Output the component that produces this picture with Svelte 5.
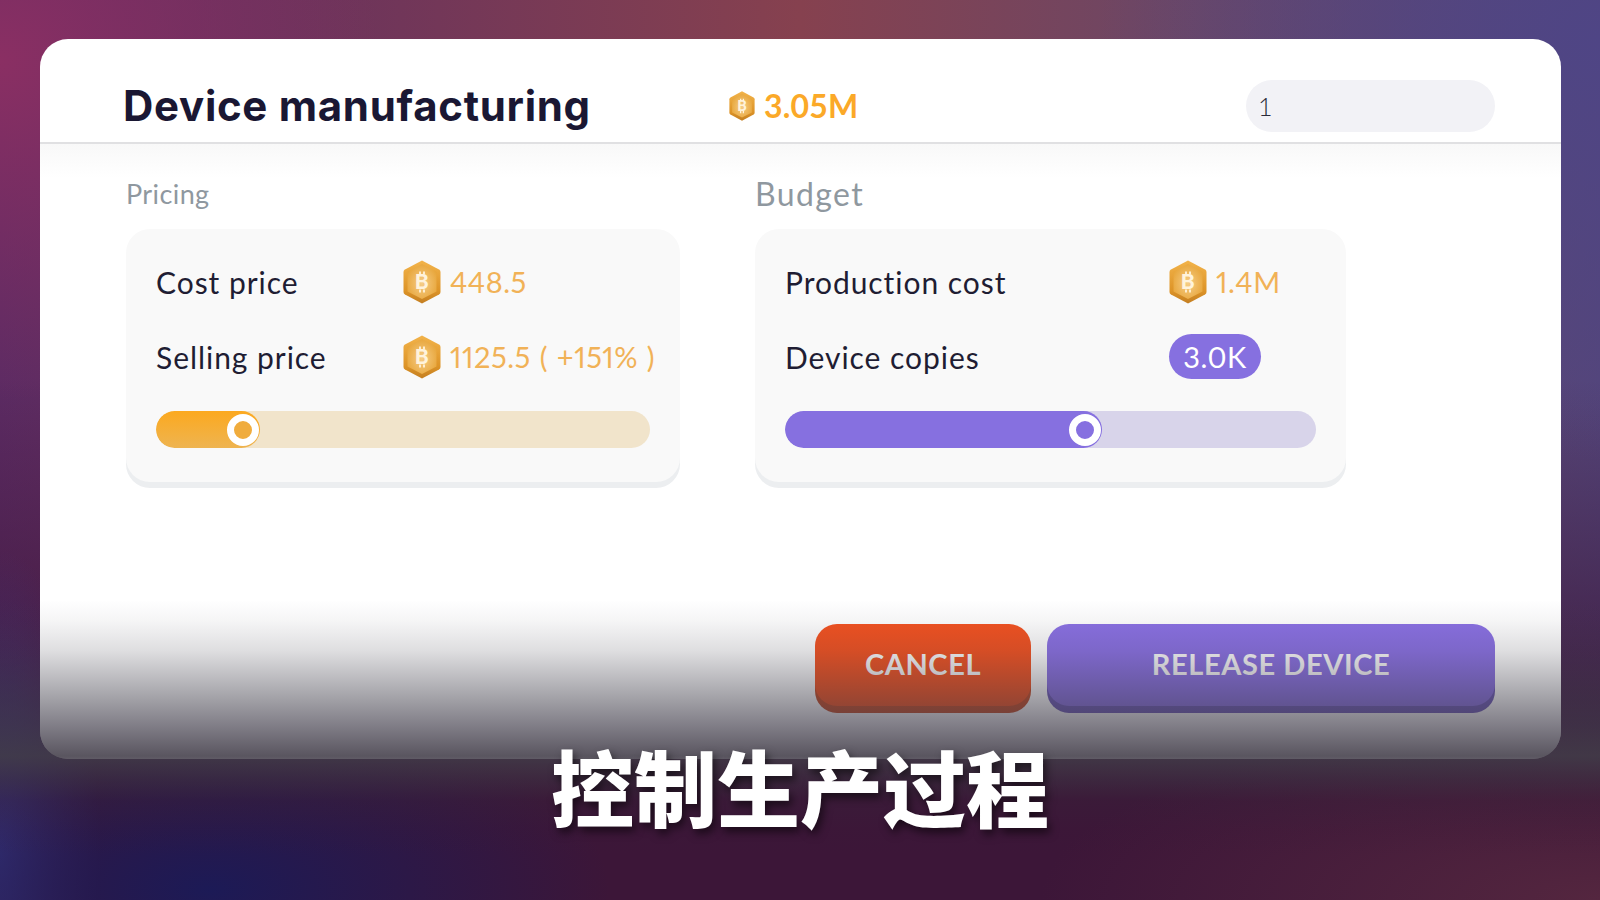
{#snippet coin(cls)}
  <svg class={cls} viewBox="0 0 38 44" aria-hidden="true">
    <path d="M19 0.5 L36 9.5 Q37.5 10.3 37.5 12 V32 Q37.5 33.7 36 34.5 L19 43.5 L2 34.5 Q0.5 33.7 0.5 32 V12 Q0.5 10.3 2 9.5 Z" fill="url(#coinEdge)" />
    <path d="M19 4 L33.5 11.8 V31.4 L19 39 L4.5 31.4 V11.8 Z" fill="url(#coinFace)" />
    <path d="M17 11.5v3M21 11.5v3M17 29.5v3M21 29.5v3" stroke="#fff3dc" stroke-width="1.8" />
    <text x="19" y="29" text-anchor="middle" class="coin-b">B</text>
  </svg>
{/snippet}

<svg class="defs" width="0" height="0" aria-hidden="true">
  <defs>
    <linearGradient id="coinEdge" x1="0" y1="0" x2="0" y2="1">
      <stop offset="0" stop-color="#f2b34a" />
      <stop offset="0.7" stop-color="#dd9428" />
      <stop offset="1" stop-color="#c47f22" />
    </linearGradient>
    <radialGradient id="coinFace" cx="0.5" cy="0.55" r="0.6">
      <stop offset="0" stop-color="#f6cd87" />
      <stop offset="1" stop-color="#e7a437" />
    </radialGradient>
  </defs>
</svg>

<main class="stage">
  <section class="card">
    <header class="head">
      <h1>Device manufacturing</h1>
      <div class="balance">
        {@render coin('coin-sm')}
        <span>3.05M</span>
      </div>
      <div class="search">1</div>
    </header>

    <div class="body">
      <div class="col col-pricing">
        <h2 class="small">Pricing</h2>
        <div class="panel">
          <div class="row">
            <span class="label">Cost price</span>
            <span class="value">{@render coin('coin-md')}<span>448.5</span></span>
          </div>
          <div class="row">
            <span class="label">Selling price</span>
            <span class="value">{@render coin('coin-md')}<span>1125.5 ( +151% )</span></span>
          </div>
          <div class="track track-gold">
            <div class="fill fill-gold"><i class="thumb thumb-gold"></i></div>
          </div>
        </div>
      </div>

      <div class="col col-budget">
        <h2>Budget</h2>
        <div class="panel">
          <div class="row">
            <span class="label">Production cost</span>
            <span class="value">{@render coin('coin-md')}<span>1.4M</span></span>
          </div>
          <div class="row">
            <span class="label">Device copies</span>
            <span class="value"><span class="pill">3.0K</span></span>
          </div>
          <div class="track track-violet">
            <div class="fill fill-violet"><i class="thumb thumb-violet"></i></div>
          </div>
        </div>
      </div>
    </div>

    <footer class="actions">
      <button class="btn cancel">CANCEL</button>
      <button class="btn release">RELEASE DEVICE</button>
    </footer>
  </section>

  <div class="shade"></div>
  <p class="caption">控制生产过程</p>
</main>

<style>
  :global(body) {
    margin: 0;
    background: #3a1538;
  }
  .defs { position: absolute; }
  .stage {
    position: relative;
    width: 1600px;
    height: 900px;
    box-sizing: border-box;
    padding: 39px 39px 141px 40px;
    overflow: hidden;
    font-family: "Lato", "Noto Sans", sans-serif;
    background:
      radial-gradient(ellipse 400px 180px at 210px 890px, #1c1a56 0%, rgba(28,26,86,0) 100%),
      radial-gradient(ellipse 100px 300px at 0px 850px, #3c3478 0%, rgba(60,52,120,0) 100%),
      radial-gradient(ellipse 560px 180px at 1600px 900px, #54263f 0%, rgba(84,38,63,0) 100%),
      radial-gradient(ellipse 500px 420px at 1600px 40px, #4f4585 0%, rgba(79,69,133,0) 100%),
      radial-gradient(ellipse 380px 340px at 0px 60px, #8a2f63 0%, rgba(138,47,99,0) 100%),
      linear-gradient(#0000 0, #0000 380px, #3c1638 790px, #3c1638 100%),
      linear-gradient(90deg, #5c2b63 0%, #86414f 50%, #6b4766 75%, #54457a 100%);
  }
  .card {
    height: 720px;
    background: #fff;
    border-radius: 28px;
    display: flex;
    flex-direction: column;
    position: relative;
    overflow: hidden;
  }
  .head {
    height: 105px;
    flex: none;
    box-sizing: border-box;
    border-bottom: 2px solid #e0e0e2;
    display: flex;
    align-items: center;
    padding: 30px 66px 0 83px;
  }
  h1 {
    margin: 0;
    font-family: "Inter", sans-serif;
    font-size: 42px;
    font-weight: 700;
    letter-spacing: 0.7px;
    color: #1a1733;
    width: 606px;
    white-space: nowrap;
  }
  .balance {
    display: flex;
    align-items: center;
    gap: 9px;
    font-size: 32px;
    font-weight: 700;
    letter-spacing: 0.2px;
    color: #fba928;
  }
  .coin-sm { width: 26px; height: 30px; }
  .coin-md { width: 38px; height: 44px; flex: none; }
  .coin-b {
    font-family: "Lato", sans-serif;
    font-weight: 900;
    font-size: 21px;
    fill: #fff3dc;
  }
  .search {
    margin-left: auto;
    width: 249px;
    height: 52px;
    box-sizing: border-box;
    padding-left: 12px;
    border-radius: 26px;
    background: #f2f2f6;
    display: flex;
    align-items: center;
    font-size: 25px;
    font-weight: 300;
    color: #2a2a3a;
  }
  .body {
    flex: 1;
    display: flex;
    padding: 35px 0 0 86px;
    gap: 75px;
    background: linear-gradient(#f8f8f8 0, #fff 34px);
  }
  .col { display: flex; flex-direction: column; }
  .col-pricing { width: 554px; }
  .col-budget { width: 591px; }
  h2 {
    margin: 0;
    height: 40px;
    font-size: 32px;
    font-weight: 400;
    line-height: 30px;
    letter-spacing: 1.4px;
    color: #8f989f;
  }
  h2.small { font-size: 27px; letter-spacing: 0.4px; }
  .panel {
    height: 253px;
    box-sizing: border-box;
    background: #f9f9f9;
    border-radius: 24px;
    box-shadow: 0 6px 0 #eceef0;
    padding: 15px 30px 0;
    margin-top: 10px;
  }
  .row {
    height: 75px;
    display: flex;
    align-items: center;
    font-size: 30px;
  }
  .label { color: #1f1d33; flex: none; letter-spacing: 0.95px; }
  .col-pricing .label { width: 247px; }
  .col-budget .label { width: 384px; }
  .value {
    display: flex;
    align-items: center;
    gap: 9px;
    color: #f1b257;
    white-space: nowrap;
    letter-spacing: 0.5px;
    word-spacing: 1px;
    font-size: 29px;
    font-weight: 400;
    font-variant-numeric: proportional-nums;
  }
  .pill {
    width: 92px;
    height: 45px;
    border-radius: 23px;
    background: #8670e0;
    color: #fff;
    font-weight: 400;
    display: flex;
    align-items: center;
    justify-content: center;
  }
  .track {
    height: 37px;
    border-radius: 19px;
    margin-top: 17px;
    overflow: hidden;
  }
  .track-gold { background: #f1e4cb; }
  .track-violet { background: #d8d4ea; }
  .fill {
    height: 100%;
    border-radius: 19px;
    position: relative;
  }
  .fill-gold {
    width: 104px;
    background: linear-gradient(#fca91f, #eeb451);
  }
  .fill-violet {
    width: 317px;
    background: #8670e0;
  }
  .thumb {
    position: absolute;
    right: 1px;
    top: 3px;
    width: 32px;
    height: 32px;
    border-radius: 50%;
    box-sizing: border-box;
    border: 7px solid #fff;
  }
  .thumb-gold { background: #f0ac3d; }
  .thumb-violet { background: #8670e0; }
  .actions {
    position: absolute;
    right: 66px;
    top: 585px;
    display: flex;
    gap: 16px;
  }
  .btn {
    height: 82px;
    border: 0;
    border-radius: 22px;
    margin: 0 0 7px;
    font: 700 29px "Lato", sans-serif;
    letter-spacing: 0.6px;
    color: #fff;
    padding: 0 0 4px;
  }
  .cancel {
    width: 216px;
    background: #f4511f;
    box-shadow: 0 7px 0 #c84a22;
  }
  .release {
    width: 448px;
    background: #8a70e4;
    box-shadow: 0 7px 0 #6c58b8;
  }
  .shade {
    position: absolute;
    left: 0;
    right: 0;
    bottom: 0;
    height: 300px;
    background: linear-gradient(rgba(60,58,70,0) 0%, rgba(60,58,70,0.05) 7%, rgba(60,58,70,0.17) 17%, rgba(60,58,70,0.48) 33%, rgba(62,58,72,0.66) 42%, rgba(65,60,72,0.87) 52%, rgba(60,50,66,0.6) 60%, rgba(56,36,58,0.3) 67%, rgba(56,30,56,0.1) 77%, rgba(56,30,56,0) 85%);
    pointer-events: none;
  }
  .caption {
    position: absolute;
    left: 0;
    right: 0;
    top: 736px;
    margin: 0;
    text-align: center;
    font: 900 83px/1.2 "Noto Sans CJK SC", sans-serif;
    color: #fff;
    text-shadow: 3px 5px 8px rgba(0,0,0,.55);
  }
</style>
